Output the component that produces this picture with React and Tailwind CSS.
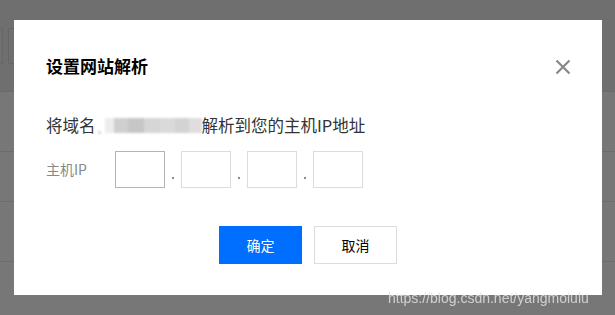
const font = { fontFamily: '"Noto Sans CJK SC", "Liberation Sans", sans-serif' };

function IpBox({ active }) {
  return (
    <input
      className={`w-[50px] h-[37px] border bg-white outline-none ${active ? "border-[#b3b3b3]" : "border-[#dcdcdc]"}`}
    />
  );
}

function Dot() {
  return (
    <span className="w-[16px] flex justify-center items-end pb-[9px]">
      <span className="w-[2px] h-[2px] bg-[#a88080]" />
    </span>
  );
}

export default function App() {
  return (
    <div className="relative w-[615px] h-[315px] overflow-hidden bg-[#777777]" style={font}>
      {/* page behind the mask */}
      <div className="h-[92px] bg-[#6f6f6f] border-b border-[#6a6a6a] flex items-center gap-[5px] -ml-[4px]">
        <div className="w-[7px] h-[36px] border border-[#666]" />
        <div className="w-[14px] h-[36px] border border-[#666]" />
      </div>
      <div className="h-[60px] border-b border-[#6c6c6c]" />
      <div className="h-[50px] border-b border-[#6c6c6c]" />
      <div className="h-[60px] border-b border-[#6c6c6c]" />

      {/* dialog */}
      <div className="absolute left-[14px] top-[20px] w-[588px] h-[275px] bg-white px-[32px] pt-[34px]">
        <div className="flex items-center justify-between">
          <h2 className="text-[17px] leading-[24px] font-bold text-black">设置网站解析</h2>
          <svg width="16" height="16" viewBox="0 0 16 16" className="mr-[-1px] mt-[1px]">
            <path d="M1.5 1.5 L14.5 14.5 M14.5 1.5 L1.5 14.5" stroke="#888" strokeWidth="2.2" />
          </svg>
        </div>
        <p className="mt-[35px] flex items-center text-[16.5px] leading-[24px] text-[#333]">
          <span>将域名</span>
          <span className="flex items-end h-[15px] w-[104px] ml-[2px] blur-[1px]">
            <span className="w-[3px] h-[3px] bg-[#dcdcdc] mr-[4px] mb-[-1px]" />
            <span className="w-[9px] h-full bg-[#ededed]" />
            <span className="w-[14px] h-full bg-[#cfcfcf]" />
            <span className="w-[16px] h-full bg-[#c6c6c6]" />
            <span className="w-[16px] h-full bg-[#d6d6d6]" />
            <span className="w-[15px] h-full bg-[#dadada]" />
            <span className="w-[14px] h-full bg-[#d3d3d3]" />
            <span className="w-[13px] h-full bg-[#dedede]" />
          </span>
          <span>解析到您的主机IP地址</span>
        </p>
        <div className="mt-[14px] flex items-center">
          <span className="w-[69px] text-[14px] text-[#888]">主机IP</span>
          <div className="flex">
            <IpBox active />
            <Dot />
            <IpBox />
            <Dot />
            <IpBox />
            <Dot />
            <IpBox />
          </div>
        </div>
        <div className="mt-[38px] flex justify-center gap-[12px]">
          <button className="w-[83px] h-[38px] bg-[#006eff] text-white text-[14px]">确定</button>
          <button className="w-[83px] h-[38px] border border-[#dcdcdc] bg-white text-black text-[14px]">取消</button>
        </div>
      </div>

      <div
        className="absolute left-[388px] top-[288px] text-[14px] text-[#e6e6e6] opacity-80"
        style={{ fontFamily: '"Liberation Sans", sans-serif' }}
      >
        https://blog.csdn.net/yangmolulu
      </div>
    </div>
  );
}
